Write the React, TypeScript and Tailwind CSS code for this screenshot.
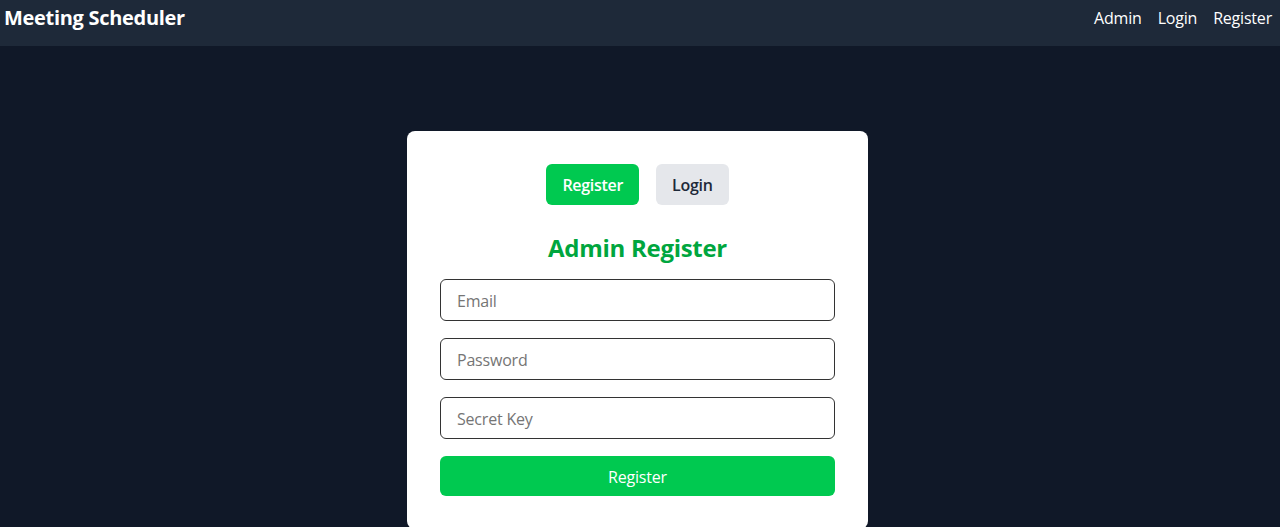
import React from "react";

export default function App() {
  return (
    <div
      className="min-h-screen bg-[#101828] overflow-hidden"
      style={{ fontFamily: '"Open Sans", "Noto Sans", sans-serif' }}
    >
      <nav className="h-[46px] bg-[#1e2939] flex items-center justify-between pl-[4px] pr-[8px]">
        <div className="text-[20px] font-bold text-white tracking-[-0.3px] -mt-[11px]">Meeting Scheduler</div>
        <div className="flex gap-4 text-white text-[16px] -mt-[10px] tracking-[-0.2px]">
          <span>Admin</span>
          <span>Login</span>
          <span>Register</span>
        </div>
      </nav>
      <div className="flex justify-center pt-[85px] pr-[5px]">
        <div className="w-[461px] bg-white rounded-lg px-[33px] pt-[33px] pb-[33px]">
          <div className="flex justify-center gap-[17px]">
            <button className="h-[41px] px-4 rounded-md bg-[#00c950] text-white font-semibold text-[16px] tracking-[-0.3px]">
              Register
            </button>
            <button className="h-[41px] px-4 rounded-md bg-[#e5e7eb] text-[#1e2939] font-semibold text-[16px] tracking-[-0.3px]">
              Login
            </button>
          </div>
          <h2 className="mt-[27px] mb-[15px] text-center text-[24px] leading-8 font-bold text-[#00a63e] tracking-[-0.3px]">
            Admin Register
          </h2>
          <div className="flex flex-col gap-[17px]">
            <input
              placeholder="Email"
              className="h-[42px] w-full border border-[#333] rounded-md px-4 pt-[2px] text-[16px] placeholder:text-[#757575] outline-none tracking-[-0.2px]"
            />
            <input
              type="password"
              placeholder="Password"
              className="h-[42px] w-full border border-[#333] rounded-md px-4 pt-[2px] text-[16px] placeholder:text-[#757575] outline-none tracking-[-0.2px]"
            />
            <input
              placeholder="Secret Key"
              className="h-[42px] w-full border border-[#333] rounded-md px-4 pt-[2px] text-[16px] placeholder:text-[#757575] outline-none tracking-[-0.2px]"
            />
            <button className="h-[40px] w-full rounded-md bg-[#00c950] text-white text-[16px] pt-[2px] tracking-[-0.2px]">
              Register
            </button>
          </div>
        </div>
      </div>
    </div>
  );
}
